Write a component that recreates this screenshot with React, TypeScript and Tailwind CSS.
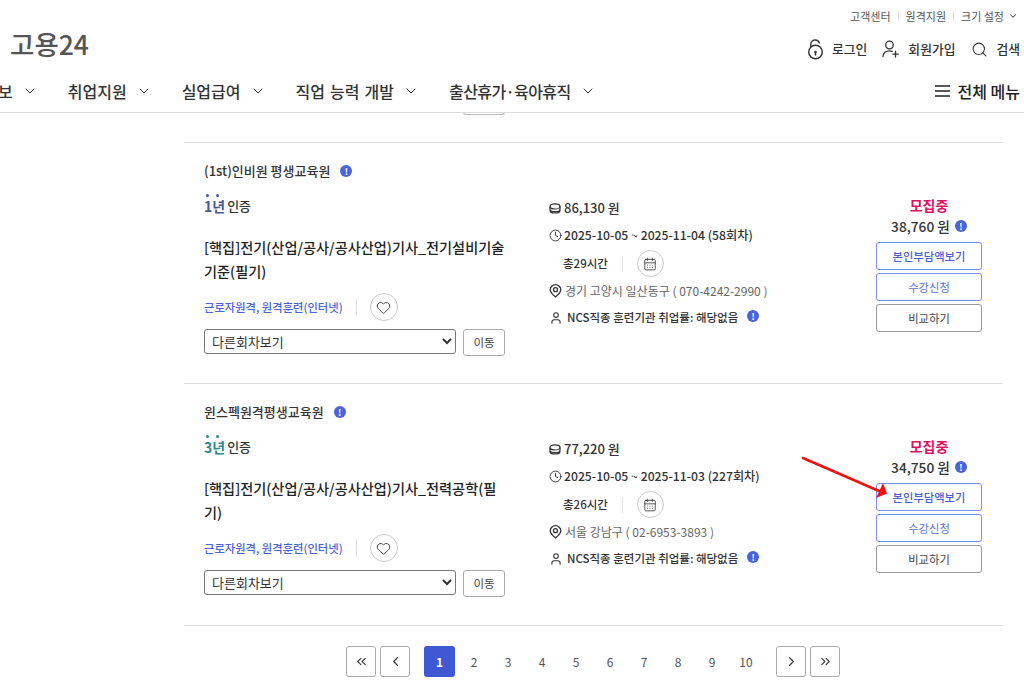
import { CalendarDays, ChevronDown, ChevronLeft, ChevronRight, ChevronsLeft, ChevronsRight, Clock, Heart, Search, User } from "lucide-react";

const font = "font-['Noto_Sans_CJK_KR','Noto_Sans',sans-serif]";

const courses = [
  {
    org: "(1st)인비원 평생교육원",
    years: "1년",
    yearColor: "text-[#4a5a94]",
    dotColor: "bg-[#4a5a94]",
    title: "[핵집]전기(산업/공사/공사산업)기사_전기설비기술기준(필기)",
    fee: "86,130 원",
    period: "2025-10-05 ~ 2025-11-04 (58회차)",
    hours: "총29시간",
    addr: "경기 고양시 일산동구 ( 070-4242-2990 )",
    pay: "38,760 원",
  },
  {
    org: "윈스펙원격평생교육원",
    years: "3년",
    yearColor: "text-[#2a8a88]",
    dotColor: "bg-[#2a8a88]",
    title: "[핵집]전기(산업/공사/공사산업)기사_전력공학(필기)",
    fee: "77,220 원",
    period: "2025-10-05 ~ 2025-11-03 (227회차)",
    hours: "총26시간",
    addr: "서울 강남구 ( 02-6953-3893 )",
    pay: "34,750 원",
  },
];

function InfoDot() {
  return (
    <span className="inline-flex h-[12px] w-[12px] shrink-0 items-center justify-center rounded-full bg-[#4a63d8] text-[9px] font-bold leading-none text-white">
      !
    </span>
  );
}

function LockIcon() {
  return (
    <svg width="17" height="21" viewBox="0 0 17 21" fill="none" stroke="#333" strokeWidth="1.4" strokeLinecap="round">
      <circle cx="8.5" cy="13" r="6.8" />
      <path d="M3.8 7.8V5.2C3.8 2.8 5.8 1 8.2 1c2 0 3.6 1.2 4.2 2.9" />
      <circle cx="8.5" cy="13" r="1.3" fill="#333" stroke="none" />
      <path d="M8.5 14v2" />
    </svg>
  );
}

function UserPlusIcon() {
  return (
    <svg width="18" height="18" viewBox="0 0 18 18" fill="none" stroke="#333" strokeWidth="1.3" strokeLinecap="round">
      <circle cx="7.5" cy="5" r="3.8" />
      <path d="M1 16.5c.4-3.6 2.8-5.6 6.5-5.6 1 0 1.9.2 2.6.5" />
      <path d="M13.5 11.5v5.5M10.8 14.2h5.4" />
    </svg>
  );
}

function CoinIcon() {
  return (
    <svg width="12" height="11" viewBox="0 0 12 11" fill="none" stroke="#333" strokeWidth="1.2">
      <ellipse cx="6" cy="3.4" rx="5" ry="2.6" />
      <path d="M1 3.4v4c0 1.5 2.2 2.6 5 2.6s5-1.100 5-2.600v-4M1 6.200c0 1.500 2.200 2.500 5 2.500s5-1 5-2.500" />
    </svg>
  );
}

function PinIcon() {
  return (
    <svg width="13" height="14" viewBox="0 0 13 14" fill="none" stroke="#333" strokeWidth="1.3">
      <path d="M6.500 13C4 10.800 1.200 8.400 1.200 5.700a5.300 5 0 0 1 10.600 0C11.800 8.400 9 10.800 6.500 13Z" />
      <circle cx="6.500" cy="5.700" r="2" />
    </svg>
  );
}

function Course({ c }: { c: (typeof courses)[number] }) {
  return (
    <div className="flex h-[241px] border-t border-[#dedede] pl-[20px] last:h-[242px]">
      <div className="w-[301px] shrink-0 pt-[19px]">
        <div className="flex h-[18px] items-center gap-[10px] text-[13px] font-medium text-[#333]">
          {c.org}
          <InfoDot />
        </div>
        <div className="mt-[12px] flex h-[24px] items-end gap-[2px]">
          <span className={`relative text-[14px] font-bold leading-[20px] ${c.yearColor}`}>
            <span className={`absolute left-[2px] top-[-2px] h-[3px] w-[3px] rounded-full ${c.dotColor}`} />
            <span className={`absolute left-[12px] top-[-2px] h-[3px] w-[3px] rounded-full ${c.dotColor}`} />
            {c.years}
          </span>
          <span className="text-[13px] font-medium leading-[20px] text-[#333]">인증</span>
        </div>
        <p className="mt-[19px] h-[48px] text-[14.2px] font-medium leading-[24px] text-[#222] [word-break:break-all]">
          {c.title}
        </p>
        <div className="mt-[10px] flex h-[28px] items-center">
          <span className="text-[11.3px] font-medium text-[#4a63d8]">근로자원격, 원격훈련(인터넷)</span>
          <span className="mx-[13px] h-[16px] w-px bg-[#ddd]" />
          <span className="flex h-[28px] w-[28px] items-center justify-center rounded-full border border-[#ccc]">
            <Heart size={15} strokeWidth={1.6} className="text-[#444]" />
          </span>
        </div>
        <div className="mt-[8px] flex items-start gap-[7px]">
          <select className="h-[25px] w-[252px] rounded-[3px] border border-[#777] bg-white pl-[3px] text-[13px] text-[#333]">
            <option>다른회차보기</option>
          </select>
          <button className="h-[27px] w-[42px] rounded-[3px] border border-[#aaa] bg-white text-[11.5px] text-[#444]">
            이동
          </button>
        </div>
      </div>

      <div className="ml-[44px] w-[327px] shrink-0 pt-[51px] text-[12px] font-medium text-[#333]">
        <div className="flex h-[28px] items-center gap-[3px] text-[13px]">
          <CoinIcon />
          {c.fee}
        </div>
        <div className="flex h-[27px] items-center gap-[2px]">
          <Clock size={13} strokeWidth={1.7} />
          <span className="text-[12.2px]">{c.period}</span>
        </div>
        <div className="flex h-[29px] items-center pl-[14px] text-[11.5px]">
          {c.hours}
          <span className="mx-[14px] h-[16px] w-px bg-[#ddd]" />
          <span className="flex h-[27px] w-[27px] items-center justify-center rounded-full border border-[#ccc]">
            <CalendarDays size={14} strokeWidth={1.4} />
          </span>
        </div>
        <div className="flex h-[26px] items-center gap-[3px] font-normal text-[#666]">
          <PinIcon />
          {c.addr}
        </div>
        <div className="flex h-[27px] items-center gap-[4px] text-[11.5px]">
          <User size={14} strokeWidth={1.8} />
          NCS직종 훈련기관 취업률: 해당없음
          <span className="ml-[5px] mb-[3px] flex">
            <InfoDot />
          </span>
        </div>
      </div>

      <div className="flex w-[106px] flex-col items-center pt-[52px]">
        <div className="text-[14px] font-bold leading-[20px] text-[#e0115f]">모집중</div>
        <div className="flex h-[22px] items-center gap-[5px] text-[13.7px] font-medium text-[#333]">
          {c.pay}
          <InfoDot />
        </div>
        <button className="mt-[5px] h-[28px] w-[106px] rounded-[3px] border border-[#7c8ff0] bg-white text-[11.3px] font-medium text-[#4a5fd0]">
          본인부담액보기
        </button>
        <button className="mt-[3px] h-[28px] w-[106px] rounded-[3px] border border-[#7c8ff0] bg-white text-[11.3px] text-[#5a74d8]">
          수강신청
        </button>
        <button className="mt-[3px] h-[28px] w-[106px] rounded-[3px] border border-[#999] bg-white text-[11.3px] text-[#444]">
          비교하기
        </button>
      </div>
    </div>
  );
}

function PageButton({ children }: { children: React.ReactNode }) {
  return (
    <button className="flex h-[31px] w-[30px] items-center justify-center rounded-[3px] border border-[#aaa] bg-white text-[#444]">
      {children}
    </button>
  );
}

export default function App() {
  const menus = ["보", "취업지원", "실업급여", "직업 능력 개발"];
  return (
    <div className={`${font} relative h-[683px] w-[1024px] overflow-hidden bg-white`}>
      <header className="relative z-10 h-[113px] border-b border-[#ddd] bg-white">
        <div className="flex h-[32px] items-center justify-end pr-[6px] text-[11px] text-[#555]">
          고객센터
          <span className="mx-[7px] h-[10px] w-px bg-[#e2e2e2]" />
          원격지원
          <span className="mx-[7px] h-[10px] w-px bg-[#e2e2e2]" />
          크기 설정
          <ChevronDown size={10} strokeWidth={2.5} className="ml-[4px]" />
        </div>
        <div className="flex h-[34px] items-center justify-between pl-[10px] pr-[4px]">
          <span className="mb-[10px] text-[26.5px] font-medium leading-none text-[#555]">고용24</span>
          <div className="flex items-center text-[12.8px] font-medium text-[#333]">
            <LockIcon />
            <span className="ml-[8px]">로그인</span>
            <span className="ml-[15px]"><UserPlusIcon /></span>
            <span className="ml-[8px]">회원가입</span>
            <Search size={17} strokeWidth={1.5} className="ml-[16px]" />
            <span className="ml-[8px]">검색</span>
          </div>
        </div>
        <div className="mt-[9px] flex h-[32px] items-center justify-between pr-[4px]">
          <nav className="ml-[-2px] flex items-center text-[16px] font-medium text-[#333] [word-spacing:1.5px]">
            {menus.map((m) => (
              <span key={m} className="mr-[30px] flex items-center gap-[9px]">
                {m}
                <ChevronDown size={16} strokeWidth={1.5} />
              </span>
            ))}
            <span className="flex items-center gap-[9px]">
              <span className="tracking-[-0.6px]">출산휴가·육아휴직</span>
              <ChevronDown size={16} strokeWidth={1.5} />
            </span>
          </nav>
          <div className="flex items-center gap-[7px] text-[16px] font-medium text-[#222]">
            <svg width="17" height="14" viewBox="0 0 17 14" stroke="#222" strokeWidth="1.6">
              <path d="M1 2h15M1 7h15M1 12h15" />
            </svg>
            전체 메뉴
          </div>
        </div>
      </header>

      <main className="w-[819px] ml-[184px]">
        <div className="ml-[279px] mt-[-1px] h-[3px] w-[42px] rounded-b-[3px] border border-t-0 border-[#bbb]" />
        <div className="mt-[27px]">
          {courses.map((c) => (
            <Course key={c.org} c={c} />
          ))}
        </div>
        <div className="border-t border-[#dedede] pt-[20px]">
          <div className="ml-[162px] flex items-center text-[12px] text-[#555]">
            <PageButton><ChevronsLeft size={15} strokeWidth={2} /></PageButton>
            <span className="ml-[4px]"><PageButton><ChevronLeft size={15} strokeWidth={2} /></PageButton></span>
            <span className="ml-[14px] flex h-[31px] w-[31px] items-center justify-center rounded-[3px] bg-[#3f58d4] font-bold text-white">1</span>
            <span className="ml-[2px] flex">
              {[2, 3, 4, 5, 6, 7, 8, 9, 10].map((n) => (
                <span key={n} className="flex h-[31px] w-[34px] items-center justify-center">{n}</span>
              ))}
            </span>
            <span className="ml-[13px]"><PageButton><ChevronRight size={15} strokeWidth={2} /></PageButton></span>
            <span className="ml-[4px]"><PageButton><ChevronsRight size={15} strokeWidth={2} /></PageButton></span>
          </div>
        </div>
      </main>

      <svg className="absolute left-[800px] top-[454px]" width="95" height="50" viewBox="0 0 95 50">
        <path d="M3 4 L79 37" stroke="#f01010" strokeWidth="2.5" strokeLinecap="round" />
        <path d="M87 39.5 L83 29 L76 44 Z" fill="#f01010" />
      </svg>
    </div>
  );
}
